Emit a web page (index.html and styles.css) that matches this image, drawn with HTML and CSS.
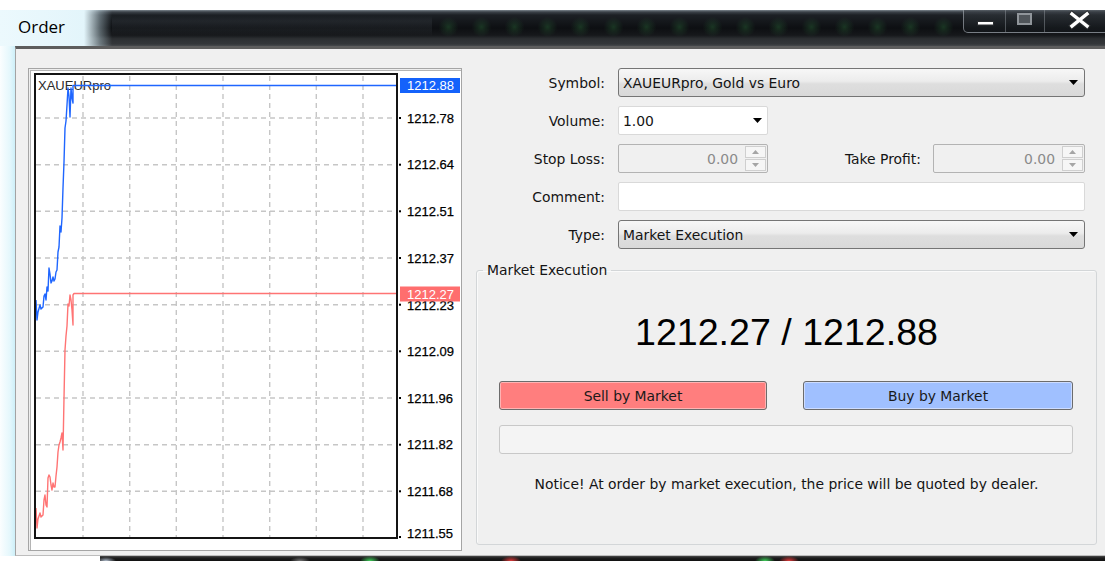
FILE: index.html
```html
<!DOCTYPE html>
<html lang="en">
<head>
<meta charset="utf-8">
<title>Order</title>
<link rel="stylesheet" href="styles.css">
</head>
<body>
<div class="screen">
  <div class="top-strip"></div>

  <header class="titlebar">
    <div class="title-glass"><span class="title">Order</span></div>
    <div class="title-haze">
      <div class="haze-text"></div>
      <div class="haze-dots"></div>
    </div>
    <div class="caption-buttons">
      <div class="cap cap-min">
        <svg width="41" height="23" viewBox="0 0 41 23"><rect x="13.5" y="11.5" width="16" height="3.5" fill="#fff" stroke="#2a2d30"/></svg>
      </div>
      <div class="cap cap-max">
        <svg width="38" height="23" viewBox="0 0 38 23"><rect x="12" y="4" width="13" height="10" fill="#50555a" stroke="#90959a" stroke-width="2"/></svg>
      </div>
      <div class="cap cap-close">
        <svg width="61" height="23" viewBox="0 0 61 23">
          <path d="M27 4 L42 16 M42 4 L27 16" stroke="#2a2d30" stroke-width="5.5" stroke-linecap="square"/>
          <path d="M27 4 L42 16 M42 4 L27 16" stroke="#fff" stroke-width="3.4" stroke-linecap="square"/>
        </svg>
      </div>
    </div>
  </header>

  <div class="workspace">
    <div class="glass-edge"></div>

    <main class="dialog">
      <section class="chart-panel">
        <svg class="chart" width="432" height="481" viewBox="0 0 432 481">
          <g transform="translate(-29 -69)">
            <g class="grid">
              <line x1="83" y1="76" x2="83" y2="537"/>
              <line x1="129.7" y1="76" x2="129.7" y2="537"/>
              <line x1="176.3" y1="76" x2="176.3" y2="537"/>
              <line x1="223" y1="76" x2="223" y2="537"/>
              <line x1="269.7" y1="76" x2="269.7" y2="537"/>
              <line x1="316.3" y1="76" x2="316.3" y2="537"/>
              <line x1="363" y1="76" x2="363" y2="537"/>
              <line x1="36" y1="118" x2="396" y2="118"/>
              <line x1="36" y1="164.7" x2="396" y2="164.7"/>
              <line x1="36" y1="211.3" x2="396" y2="211.3"/>
              <line x1="36" y1="258" x2="396" y2="258"/>
              <line x1="36" y1="304.7" x2="396" y2="304.7"/>
              <line x1="36" y1="351.3" x2="396" y2="351.3"/>
              <line x1="36" y1="398" x2="396" y2="398"/>
              <line x1="36" y1="444.7" x2="396" y2="444.7"/>
              <line x1="36" y1="491.3" x2="396" y2="491.3"/>
            </g>

            <text class="symbol-name" x="38" y="85">XAUEURpro</text>

            <path class="bid" d="M36,508 L37,528 L38,519 L40,513 L41,517 L43,515 L44,500 L45,495 L46,505 L47,507 L48,478 L49,475 L50,477 L51,485 L52,490 L53,483 L54,487 L55,487 L56,476 L57,467 L58,452 L59,445 L60,442 L61,438 L62,433 L63,450 L64,398 L65,350 L66,336 L67,326 L68,304 L69,306 L70,295 L71,300 L72,310 L73,325 L73,295 L74,293.5 L397,293.5"/>
            <path class="ask" d="M36,300 L37,320 L38,312 L40,305 L41,309 L43,307 L44,296 L45,294 L46,300 L47,287 L48,291 L49,268 L50,274 L51,283 L52,281 L53,277 L54,281 L55,279 L56,272 L57,270 L58,252 L59,247 L60,226 L61,232 L62,218 L63,188 L64,162 L65,128 L66,121 L67,105 L68,88 L69,96 L70,117 L71,88 L72,98 L73,103 L73,85.5 L397,85.5"/>

            <rect class="frame" x="35" y="74" width="362" height="464"/>

            <g class="ticks">
              <rect x="399" y="117" width="2" height="2"/>
              <rect x="399" y="163.7" width="2" height="2"/>
              <rect x="399" y="210.3" width="2" height="2"/>
              <rect x="399" y="257" width="2" height="2"/>
              <rect x="399" y="303.7" width="2" height="2"/>
              <rect x="399" y="350.3" width="2" height="2"/>
              <rect x="399" y="397" width="2" height="2"/>
              <rect x="399" y="443.7" width="2" height="2"/>
              <rect x="399" y="490.3" width="2" height="2"/>
              <rect x="399" y="536" width="2" height="2"/>
            </g>

            <g class="axis">
              <text x="407" y="118">1212.78</text>
              <text x="407" y="164.7">1212.64</text>
              <text x="407" y="211.3">1212.51</text>
              <text x="407" y="258">1212.37</text>
              <text x="407" y="305.5">1212.23</text>
              <text x="407" y="351.3">1212.09</text>
              <text x="407" y="398">1211.96</text>
              <text x="407" y="444.7">1211.82</text>
              <text x="407" y="491.3">1211.68</text>
              <text x="407" y="533">1211.55</text>
            </g>

            <rect class="tag-ask" x="400" y="78" width="60" height="15"/>
            <text class="tag-text" x="407" y="85.5">1212.88</text>
            <rect class="tag-bid" x="400" y="286.5" width="60" height="15"/>
            <text class="tag-text" x="407" y="294">1212.27</text>
          </g>
        </svg>
      </section>

      <section class="order">
        <div class="form">
          <div class="row">
            <span class="label">Symbol:</span>
            <div class="combo">
              <span class="value">XAUEURpro, Gold vs Euro</span>
              <svg class="arrow" width="9" height="5" viewBox="0 0 9 5"><path d="M0 0 H9 L4.5 5 Z"/></svg>
            </div>
          </div>
          <div class="row">
            <span class="label">Volume:</span>
            <div class="field short">
              <span class="value">1.00</span>
              <svg class="arrow vol-arrow" width="9" height="5" viewBox="0 0 9 5"><path d="M0 0 H9 L4.5 5 Z"/></svg>
            </div>
          </div>
          <div class="row">
            <span class="label">Stop Loss:</span>
            <div class="spin short">
              <span class="spin-value">0.00</span>
              <div class="spinner">
                <span class="spin-up"><svg width="7" height="4" viewBox="0 0 7 4"><path d="M0 4 H7 L3.5 0 Z"/></svg></span>
                <span class="spin-down"><svg width="7" height="4" viewBox="0 0 7 4"><path d="M0 0 H7 L3.5 4 Z"/></svg></span>
              </div>
            </div>
            <span class="label tp-label">Take Profit:</span>
            <div class="spin tp">
              <span class="spin-value">0.00</span>
              <div class="spinner">
                <span class="spin-up"><svg width="7" height="4" viewBox="0 0 7 4"><path d="M0 4 H7 L3.5 0 Z"/></svg></span>
                <span class="spin-down"><svg width="7" height="4" viewBox="0 0 7 4"><path d="M0 0 H7 L3.5 4 Z"/></svg></span>
              </div>
            </div>
          </div>
          <div class="row">
            <span class="label">Comment:</span>
            <div class="field wide"></div>
          </div>
          <div class="row">
            <span class="label">Type:</span>
            <div class="combo">
              <span class="value">Market Execution</span>
              <svg class="arrow" width="9" height="5" viewBox="0 0 9 5"><path d="M0 0 H9 L4.5 5 Z"/></svg>
            </div>
          </div>
        </div>

        <fieldset class="execution">
          <legend>Market Execution</legend>
          <div class="quote">1212.27 / 1212.88</div>
          <div class="trade-buttons">
            <div class="btn sell">Sell by Market</div>
            <div class="btn buy">Buy by Market</div>
          </div>
          <div class="status-bar"></div>
          <p class="notice">Notice! At order by market execution, the price will be quoted by dealer.</p>
        </fieldset>
      </section>
    </main>
  </div>

  <div class="taskbar">
    <div class="taskbar-left"></div>
    <div class="taskbar-main"></div>
  </div>
</div>
</body>
</html>
```

FILE: styles.css
```css
* {
  box-sizing: border-box;
}

html,
body {
  margin: 0;
  padding: 0;
}

body {
  width: 1105px;
  height: 561px;
  overflow: hidden;
  background: #fff;
  font-family: "DejaVu Sans", sans-serif;
  font-size: 13.9px;
  color: #141414;
}

.screen {
  display: flex;
  flex-direction: column;
  width: 1105px;
  height: 561px;
}

.top-strip {
  height: 10px;
  background: #fff;
}

/* ---------- title bar ---------- */
.titlebar {
  height: 36px;
  display: flex;
  background: linear-gradient(to bottom,
      #7a848d 0,
      #3b4148 2px,
      #1c2025 5px,
      #0d0f12 50%,
      #16181b 70%,
      #2c2f32 80%,
      #333639 94%,
      #45484b 100%);
}

.title-glass {
  width: 112px;
  display: flex;
  align-items: center;
  padding: 0 0 4px 18px;
  background: linear-gradient(to right,
      #ecf9fd 0,
      #e3f5fb 84px,
      rgba(200, 225, 235, 0.4) 100px,
      rgba(200, 225, 235, 0) 112px);
}

.title {
  font-family: "Open Sans", sans-serif;
  font-size: 17px;
  color: #000;
}

.title-haze {
  flex: 1;
  display: flex;
}

.haze-text {
  width: 320px;
  background:
    linear-gradient(to bottom,
      transparent 6px,
      rgba(110, 120, 130, 0.14) 11px,
      rgba(110, 120, 130, 0.1) 20px,
      transparent 26px);
}

.haze-dots {
  flex: 1;
  background-image: radial-gradient(circle at 50% 17px,
      rgba(45, 115, 60, 0.38) 0,
      rgba(45, 115, 60, 0.2) 4px,
      rgba(45, 115, 60, 0) 10px);
  background-size: 33px 36px;
  background-repeat: repeat-x;
}

.caption-buttons {
  align-self: flex-start;
  height: 23px;
  display: flex;
  border-left: 1px solid rgba(175, 182, 190, 0.6);
  border-bottom: 1px solid rgba(175, 182, 190, 0.6);
  border-bottom-left-radius: 5px;
  background: linear-gradient(to bottom, rgba(60, 66, 72, 0.55), rgba(20, 24, 28, 0.6));
}

.cap {
  height: 22px;
  overflow: hidden;
}

.cap svg {
  display: block;
}

.cap-min {
  width: 41px;
}

.cap-max {
  width: 39px;
  border-left: 1px solid rgba(150, 158, 165, 0.45);
}

.cap-close {
  width: 61px;
  border-left: 1px solid rgba(150, 158, 165, 0.45);
}

/* ---------- dialog body ---------- */
.workspace {
  height: 510px;
  display: flex;
}

.glass-edge {
  width: 15px;
  background: linear-gradient(to right, #fbfeff 0, #e4f7fc 10px, #cdeff8 15px);
}

.dialog {
  flex: 1;
  display: flex;
  align-items: flex-start;
  gap: 14px;
  padding: 19px 8px 0 12px;
  background: #f0f0f0;
  border-top: 3px solid #5d5d5d;
  border-left: 1px solid #a3a3a3;
  border-bottom: 1px solid #bdbdbd;
}

/* ---------- chart ---------- */
.chart-panel {
  width: 434px;
  height: 483px;
  background: #fff;
  border: 1px solid #a5a5a5;
  box-shadow: inset 1px 1px 0 #eeeeee, inset 2px 2px 0 #b4b4b4;
}

.chart {
  display: block;
}

.grid line {
  stroke: #c6c6c6;
  stroke-width: 1.4;
  stroke-dasharray: 5 4;
}

.frame {
  fill: none;
  stroke: #141414;
  stroke-width: 2;
}

.ticks rect {
  fill: #000;
}

.symbol-name {
  font-family: "Liberation Sans", sans-serif;
  font-size: 13px;
  fill: #2a2a2a;
  dominant-baseline: central;
}

.ask,
.bid {
  fill: none;
  stroke-width: 1.4;
  stroke-linejoin: round;
}

.ask {
  stroke: #1f66ff;
}

.bid {
  stroke: #ff7474;
}

.axis text {
  font-family: "Liberation Sans", sans-serif;
  font-size: 13px;
  fill: #000;
  stroke: #000;
  stroke-width: 0.25;
  dominant-baseline: central;
}

.tag-ask {
  fill: #1462fb;
}

.tag-bid {
  fill: #ff6e6e;
}

.tag-text {
  font-family: "Liberation Sans", sans-serif;
  font-size: 13px;
  fill: #fff;
  dominant-baseline: central;
}

/* ---------- order form ---------- */
.order {
  width: 621px;
  display: flex;
  flex-direction: column;
}

.form {
  display: flex;
  flex-direction: column;
  gap: 9px;
  padding-right: 12px;
}

.row {
  height: 29px;
  display: flex;
  align-items: center;
}

.label {
  width: 129px;
  margin-right: 13px;
  text-align: right;
  white-space: nowrap;
}

.tp-label {
  width: auto;
  flex: 1;
  margin-right: 12px;
}

.combo,
.field,
.spin {
  height: 29px;
  display: flex;
  align-items: center;
}

.combo {
  flex: 1;
  padding-left: 4px;
  border: 1px solid #757575;
  border-radius: 3px;
  background: linear-gradient(to bottom, #f7f7f7 0, #ececec 45%, #dedede 55%, #d9d9d9 100%);
}

.arrow {
  margin-left: auto;
  margin-right: 6px;
  fill: #000;
}

.vol-arrow {
  margin-right: 5px;
}

.field {
  padding-left: 4px;
  background: #fff;
  border: 1px solid #d9d9d9;
  border-radius: 2px;
}

.short {
  width: 150px;
}

.wide {
  flex: 1;
}

.spin {
  justify-content: flex-end;
  padding: 1px;
  background: #f0f0f0;
  border: 1px solid #b3b3b3;
  border-radius: 2px;
}

.tp {
  width: 152px;
}

.spin-value {
  margin-right: 7px;
  color: #8a8a8a;
}

.spinner {
  width: 21px;
  height: 100%;
  display: flex;
  flex-direction: column;
  gap: 1px;
}

.spin-up,
.spin-down {
  flex: 1;
  display: flex;
  align-items: center;
  justify-content: center;
  background: #f6f6f6;
  border: 1px solid #cfcfcf;
}

.spinner svg {
  fill: #a5a5a5;
}

/* ---------- market execution group ---------- */
.execution {
  margin: 13px 0 0;
  padding: 0;
  min-width: 0;
  height: 283px;
  border: 1px solid #d3d6d8;
  border-radius: 3px;
  box-shadow: inset 1px 1px 0 #fafafa;
}

.execution legend {
  margin-left: 6px;
  padding: 0 4px;
  line-height: 17px;
}

.quote {
  margin-top: 33px;
  height: 40px;
  line-height: 40px;
  text-align: center;
  font-family: "Liberation Sans", sans-serif;
  font-size: 37.6px;
  color: #000;
}

.trade-buttons {
  display: flex;
  justify-content: space-between;
  margin: 29px 23px 0 22px;
}

.btn {
  height: 29px;
  display: flex;
  align-items: center;
  justify-content: center;
  border: 1px solid #6c6c6c;
  border-radius: 3px;
  color: #1a1a1a;
}

.sell {
  width: 268px;
  background: #ff7e7e;
  box-shadow: inset 0 0 0 1px #ffb3b3;
}

.buy {
  width: 270px;
  background: #a0c0ff;
  box-shadow: inset 0 0 0 1px #cddcff;
}

.status-bar {
  height: 29px;
  margin: 15px 23px 0 22px;
  background: #f4f4f4;
  border: 1px solid #c8c8c8;
  border-radius: 3px;
}

.notice {
  margin: 21px 0 0;
  line-height: 18px;
  text-align: center;
}

/* ---------- desktop strip below the window ---------- */
.taskbar {
  height: 5px;
  display: flex;
}

.taskbar-left {
  width: 100px;
  background: #fff;
}

.taskbar-main {
  flex: 1;
  background:
    radial-gradient(ellipse 10px 4px at 6px 100%, rgba(220, 235, 255, 0.8), transparent),
    radial-gradient(ellipse 10px 4px at 200px 100%, rgba(160, 160, 160, 0.7), transparent),
    radial-gradient(ellipse 10px 5px at 270px 100%, #3fd25a, transparent),
    radial-gradient(ellipse 10px 5px at 411px 100%, #e23a3a, transparent),
    radial-gradient(ellipse 10px 5px at 665px 100%, #3fd25a, transparent),
    radial-gradient(ellipse 10px 5px at 689px 100%, #e23a3a, transparent),
    linear-gradient(to bottom, #4a4a4a 0, #1d1d1d 2px, #111 100%);
}
```
